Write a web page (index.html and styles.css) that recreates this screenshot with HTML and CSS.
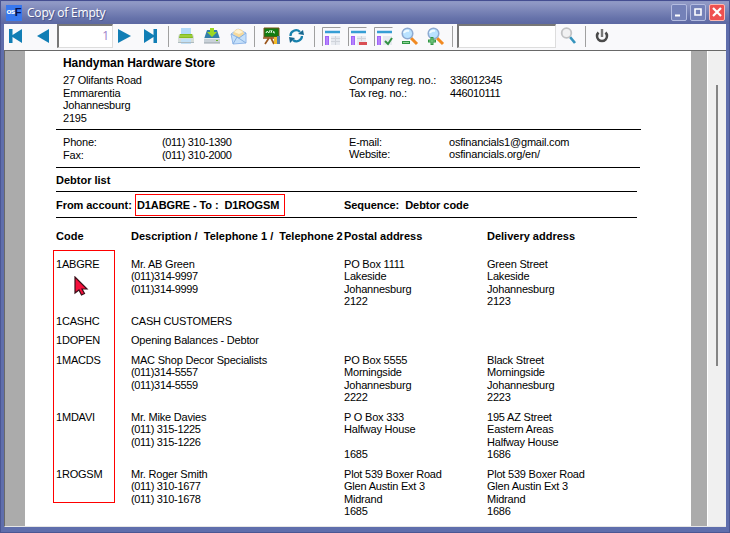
FILE: index.html
```html
<!DOCTYPE html>
<html lang="en">
<head>
<meta charset="utf-8">
<title>Copy of Empty</title>
<link rel="stylesheet" href="styles.css">
</head>
<body>
<div class="window">
  <header class="titlebar">
    <span class="logo"><span class="logo-os">os</span><span class="logo-f">F</span></span>
    <span class="caption">Copy of Empty</span>
    <span class="winbtn"><svg width="16" height="16"><path d="M4 11.500h5" stroke="#fff" stroke-width="2"/></svg></span>
    <span class="winbtn"><svg width="16" height="16"><path d="M5 5h6v6H5zM4.500 5h7" fill="none" stroke="#fff" stroke-width="1.600"/></svg></span>
    <span class="winbtn close"><svg width="16" height="16"><path d="M4 4l8 8M12 4l-8 8" stroke="#fff" stroke-width="2.200"/></svg></span>
  </header>
  <nav class="toolbar">
    <svg class="ic first" width="14" height="16"><path d="M0 1h3.500v6L13 1v14L3.500 9v6H0z" fill="#117eb5"/></svg>
    <svg class="ic prev" width="12" height="16"><path d="M12 1v14L0 8z" fill="#117eb5"/></svg>
    <span class="page-no">1</span>
    <svg class="ic next" width="13" height="16"><path d="M0 1v14l13-7z" fill="#117eb5"/></svg>
    <svg class="ic last" width="14" height="16"><path d="M13 1h-3.500v6L0 1v14l9.500-6v6H13z" fill="#117eb5"/></svg>
    <i class="sep s1"></i>
    <svg class="ic print" width="18" height="18"><path d="M4 1h10v7H4z" fill="#b2daf8"/><path d="M2 7h14l1 3v5H1v-5z" fill="#d6ddd9"/><path d="M3 7h12l1 4H2z" fill="#83bd21"/><path d="M3 9h12" stroke="#b8dc55"/><path d="M4 12h10v5H4z" fill="#c1e0f7"/><path d="M1 15.500h16" stroke="#aebbc0"/></svg>
    <svg class="ic save" width="18" height="18"><path d="M4 3h10l3 9H1z" fill="#337fa9"/><path d="M7 1h4v4h3l-5 5-5-5h3z" fill="#9bd822"/><path d="M1 11h16v5H1z" fill="#c9d1d8"/><path d="M1 11.500h16" stroke="#e7ebef"/><path d="M13 13.500h2" stroke="#71b62b"/><path d="M1 16h16" stroke="#98a2ab"/></svg>
    <svg class="ic mail" width="17" height="18"><path d="M1 7l7-5 8 4v10L3 17z" fill="#c5e0fa" stroke="#92b8ea"/><path d="M3 7c1-4 3-5 6-5 3 0 5 3 5 5l-5 4z" fill="#f6d99c"/><path d="M4 5l4-3 5 3-4 2z" fill="#fff3d4"/><path d="M1 7l8 4 7-5M3 17l4-7 9 6" fill="none" stroke="#86afdf"/></svg>
    <i class="sep s2"></i>
    <svg class="ic board" width="18" height="18"><path d="M1 1h15v9H1z" fill="#137c12" stroke="#795319"/><path d="M3 6q1-3 2-1t2-1v-1M8 6l1-3M11 4q-2 2 1 2" fill="none" stroke="#eaffea"/><path d="M0 11h12M6 11l-4 6M8 11l3 6" stroke="#9b561d" stroke-width="1.700"/><path d="M11 10h3v7h-3z" fill="#f3bd29"/><path d="M14 9h3v8h-3z" fill="#5280ae"/></svg>
    <svg class="ic refresh" width="15" height="16"><path d="M1.500 8A5.500 5.500 0 0 1 11 4M13 8A5.500 5.500 0 0 1 4 12" fill="none" stroke="#1781ad" stroke-width="2.300"/><path d="M9 6l6 1-1-5zM6 10l-6-1 1 6z" fill="#17678f"/></svg>
    <i class="sep s3"></i>
    <svg class="ic pane" width="20" height="20"><path d="M.500 19V.500h18" fill="none" stroke="#9b9b9b"/><path d="M3 3h15v4H3z" fill="#c8e1f5"/><path d="M3 4h15v2H3z" fill="#369ed4"/><path d="M3 9h4v9H3z" fill="#a062f8"/><path d="M5 10v8" stroke="#c9a4ff"/><path d="M9 9h9v9H9z" fill="#e7eaf0"/><path d="M9 11.500h9M9 14.500h9M13.500 9v9" stroke="#d0d4db"/></svg>
    <svg class="ic pane2" width="20" height="20"><path d="M.500 19V.500h18" fill="none" stroke="#9b9b9b"/><path d="M3 3h15v4H3z" fill="#c8e1f5"/><path d="M3 4h15v2H3z" fill="#369ed4"/><path d="M3 9h4v9H3z" fill="#a062f8"/><path d="M5 10v8" stroke="#c9a4ff"/><path d="M9 9h9v9H9z" fill="#e7eaf0"/><path d="M9 11.500h9M13.500 9v5" stroke="#d0d4db"/><path d="M11 15h8v3h-8z" fill="#d94f54"/></svg>
    <svg class="ic pane2" width="20" height="20"><path d="M.500 19V.500h18" fill="none" stroke="#9b9b9b"/><path d="M3 3h15v4H3z" fill="#c8e1f5"/><path d="M3 4h15v2H3z" fill="#369ed4"/><path d="M3 9h4v9H3z" fill="#a062f8"/><path d="M5 10v8" stroke="#c9a4ff"/><path d="M9 9h9v9H9z" fill="#e7eaf0"/><path d="M11 14l3 3 4-6" fill="none" stroke="#329244" stroke-width="2"/></svg>
    <svg class="ic zoomout" width="19" height="19"><path d="M11 11l6 6" stroke="#f18a22" stroke-width="3"/><circle cx="7.500" cy="6.500" r="5.300" fill="#b9e2ff" stroke="#8eaad1" stroke-width="1.500"/><path d="M4 6q1-3 5-2" fill="none" stroke="#effaff" stroke-width="2"/><path d="M2 14h8v3H2z" fill="#309544"/><path d="M3 15.500h6" stroke="#8bd995"/></svg>
    <svg class="ic zoomin" width="19" height="19"><path d="M11 11l6 6" stroke="#f18a22" stroke-width="3"/><circle cx="7.500" cy="6.500" r="5.300" fill="#b9e2ff" stroke="#8eaad1" stroke-width="1.500"/><path d="M4 6q1-3 5-2" fill="none" stroke="#effaff" stroke-width="2"/><path d="M2 14h8M6 10v8" stroke="#309544" stroke-width="3"/><path d="M3 14h6M6 11v6" stroke="#7fce88"/></svg>
    <i class="sep s4"></i>
    <span class="search"></span>
    <svg class="ic find" width="17" height="18"><path d="M10 10l5 6" stroke="#3694bd" stroke-width="2.700"/><circle cx="6.500" cy="6" r="4.800" fill="#f1f1f2" stroke="#c1c2c4" stroke-width="1.800"/></svg>
    <i class="sep s5"></i>
    <svg class="ic power" width="14" height="16"><path d="M3.500 4.500A5 5 0 1 0 10.500 4.500" fill="none" stroke="#4a4a4a" stroke-width="2.500"/><path d="M7 1v8" stroke="#777" stroke-width="2.400"/></svg>
  </nav>
  <main class="viewer">
    <article class="paper">
      <section class="company">
        <h1>Handyman Hardware Store</h1>
        <div class="company-grid">
          <p>27 Olifants Road<br>Emmarentia<br>Johannesburg<br>2195</p>
          <p>Company reg. no.:<br>Tax reg. no.:</p>
          <p class="num">336012345<br>446010111</p>
        </div>
      </section>
      <section class="contact">
        <p>Phone:<br>Fax:</p>
        <p class="num">(011) 310-1390<br>(011) 310-2000</p>
        <p class="web">E-mail:<br>Website:</p>
        <p class="web">osfinancials1@gmail.com<br>osfinancials.org/en/</p>
      </section>
      <h2 class="list-title">Debtor list</h2>
      <section class="filter">
        <b class="from">From account:</b>
        <b class="range">D1ABGRE - To :&nbsp; D1ROGSM</b>
        <b class="seq">Sequence:&nbsp; Debtor code</b>
      </section>
      <section class="row head">
        <b>Code</b><b>Description /&nbsp; Telephone 1 /&nbsp; Telephone 2</b><b>Postal address</b><b>Delivery address</b>
      </section>
      <div class="records">
        <div class="row tall"><p>1ABGRE</p><p>Mr. AB Green<br><span class="num">(011)314-9997<br>(011)314-9999</span></p><p>PO Box 1111<br>Lakeside<br>Johannesburg<br>2122</p><p>Green Street<br>Lakeside<br>Johannesburg<br>2123</p></div>
        <div class="row short"><p>1CASHC</p><p>CASH CUSTOMERS</p></div>
        <div class="row open"><p>1DOPEN</p><p>Opening Balances - Debtor</p></div>
        <div class="row tall"><p>1MACDS</p><p>MAC Shop Decor Specialists<br><span class="num">(011)314-5557<br>(011)314-5559</span></p><p>PO Box 5555<br>Morningside<br>Johannesburg<br>2222</p><p>Black Street<br>Morningside<br>Johannesburg<br>2223</p></div>
        <div class="row tall"><p>1MDAVI</p><p>Mr. Mike Davies<br><span class="num">(011) 315-1225<br>(011) 315-1226</span></p><p>P O Box 333<br>Halfway House<br><br>1685</p><p>195 AZ Street<br>Eastern Areas<br>Halfway House<br>1686</p></div>
        <div class="row tall"><p>1ROGSM</p><p>Mr. Roger Smith<br><span class="num">(011) 310-1677<br>(011) 310-1678</span></p><p>Plot 539 Boxer Road<br>Glen Austin Ext 3<br>Midrand<br>1685</p><p>Plot 539 Boxer Road<br>Glen Austin Ext 3<br>Midrand<br>1686</p></div>
        <div class="code-mark"></div>
        <svg class="cursor" width="15" height="20"><path d="M1 1v16l4-3 2.500 5 3-1.500L8 13h5z" fill="#f5103c" stroke="#381019" stroke-width="1.200"/></svg>
      </div>
    </article>
    <div class="scroll"><i></i></div>
  </main>
</div>
</body>
</html>
```

FILE: styles.css
```css
* { box-sizing: border-box; }
body { margin: 0; font: 11px/12.4px "Liberation Sans", Arial, sans-serif; color: #000; }
p, h1, h2 { margin: 0; }
.window { width: 730px; height: 533px; padding: 0 3px 5px; background: #5f6eac; border: solid #4b5693; border-width: 0 1px 1px; display: flex; flex-direction: column; overflow: hidden; }
.titlebar { height: 24px; flex: none; margin: 0 -3px; padding: 0 4px 0 5px; display: flex; align-items: center; border-top: 1px solid #454e91; background: linear-gradient(#8c96c3 0, #9099c5 8%, #6672aa 75%, #5c68a2); }
.logo { width: 16px; height: 16px; background: #3878ee; display: flex; align-items: center; justify-content: center; font-weight: bold; font-size: 8px; }
.logo-os { color: #fff; letter-spacing: -.6px; }
.logo-f { color: #05104a; font-size: 11px; }
.caption { margin-left: 5px; flex: 1; color: #fff; font: 12px/20px "Open Sans", "Noto Sans", sans-serif; letter-spacing: -.2px; text-shadow: 1px 1px #4d578e; }
.winbtn { width: 16px; height: 17px; margin-left: 3px; border: 1px solid #b4bce0; border-radius: 2px; background: #7481b8; overflow: hidden; }
.winbtn svg { display: block; margin: -1px; }
.close { background: #ef5050; border-color: #ffb8b0; }
.toolbar { height: 26px; flex: none; display: flex; align-items: flex-start; background: #f9f9fb; }
.ic { flex: none; display: block; }
.first { margin: 4px 0 0 5px; }
.prev { margin: 4px 0 0 14px; }
.page-no { width: 56px; height: 24px; margin-left: 8px; border: 1px solid #ddd; border-top: 2px solid #777; border-left: 2px solid #777; background: #fff; color: #9b7fc9; text-align: right; padding: 3px 3px 0 0; font: 12px/14px "Open Sans", sans-serif; flex: none; }
.next { margin: 4px 0 0 5px; }
.last { margin: 4px 0 0 13px; }
.sep { width: 1px; height: 21px; margin-top: 2px; background: #a0a0a0; flex: none; }
.s1 { margin-left: 10px; }
.print { margin: 3px 0 0 8px; }
.save { margin: 3px 0 0 8px; }
.mail { margin: 3px 0 0 9px; }
.s2 { margin-left: 7px; }
.board { margin: 3px 0 0 8px; }
.refresh { margin: 4px 0 0 8px; }
.s3 { margin-left: 10px; }
.pane { margin: 3px 0 0 7px; }
.pane2 { margin: 3px 0 0 6px; }
.zoomout { margin: 3px 0 0 6px; }
.zoomin { margin: 3px 0 0 7px; }
.s4 { margin-left: 7px; }
.search { width: 99px; height: 24px; margin-left: 4px; background: #fff; border: 1px solid #ddd; border-top: 2px solid #777; border-left: 2px solid #777; flex: none; }
.find { margin: 3px 0 0 4px; }
.s5 { margin-left: 8px; }
.power { margin: 4px 0 0 9px; }
.viewer { flex: 1; min-height: 0; display: flex; background: #ababab; border: 1px solid #696969; border-right: 0; border-bottom-color: #e6e6e6; padding-left: 20px; overflow: hidden; }
.paper { width: 666px; background: #fff; flex: none; padding: 5px 0 0 31px; overflow: hidden; letter-spacing: -.2px; }
.paper .num { letter-spacing: -.35px; }
.paper b, .list-title { letter-spacing: 0; }
.scroll { margin-left: 16px; flex: 1; background: #f0f0f0; border-left: 1px solid #fff; display: flex; justify-content: center; padding-top: 34px; }
.scroll i { width: 2px; height: 281px; background: #858585; }
.company { height: 74px; padding-left: 7px; width: 585px; border-bottom: 1px solid #000; }
h1 { font-size: 12px; line-height: 14px; letter-spacing: -.05px; }
.company-grid { display: grid; grid-template-columns: 286px 101px 1fr; line-height: 12.6px; padding-top: 4px; }
.contact { display: grid; grid-template-columns: 99px 187px 100px 1fr; padding: 6px 0 0 7px; height: 38px; width: 584px; border-bottom: 1px solid #000; line-height: 12.6px; }
.contact .web { line-height: 12px; }
.list-title { font-size: 11px; line-height: 23px; height: 24px; width: 581px; border-bottom: 1px solid #000; padding-top: 1px; }
.filter { height: 26px; width: 581px; border-bottom: 1px solid #000; display: grid; grid-template-columns: 79px 150px 1fr; align-items: center; line-height: 20px; padding-top: 1px; }
.filter .from, .filter .seq { letter-spacing: -.05px; }
.filter .range { height: 22px; border: 1px solid #f00; padding-left: 1px; white-space: nowrap; letter-spacing: -.1px; }
.seq { padding-left: 59px; }
.row { display: grid; grid-template-columns: 75px 213px 143px 1fr; white-space: nowrap; }
.head { height: 40px; padding-top: 12px; }
.records { position: relative; }
.tall { height: 57px; }
.short { height: 19px; }
.open { height: 20px; }
.code-mark { position: absolute; left: -3px; top: -8px; width: 62px; height: 253px; border: 1px solid #f00; }
.cursor { position: absolute; left: 18px; top: 18px; }
```
